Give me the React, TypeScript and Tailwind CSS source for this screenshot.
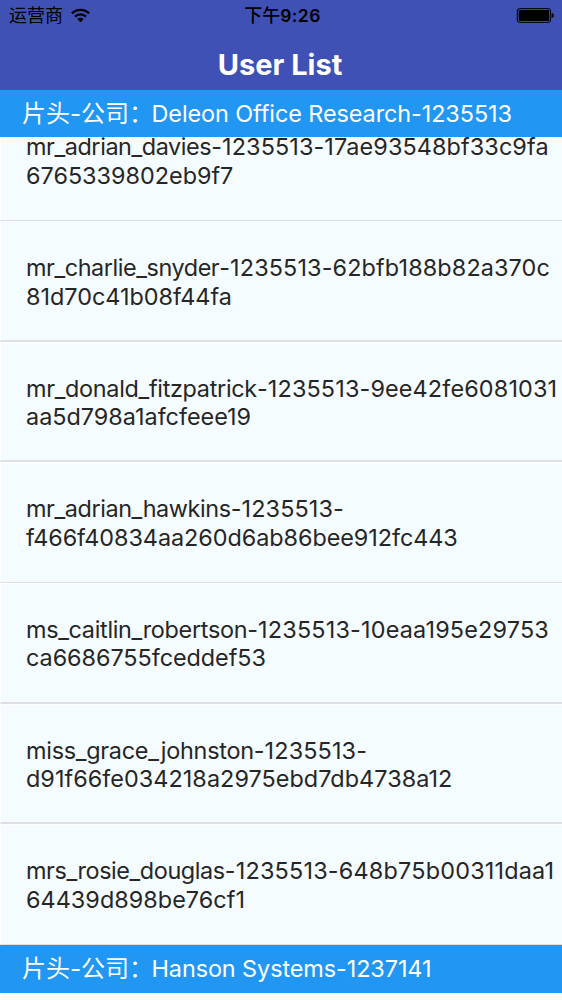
import React from "react";

interface Entry {
  name: string;
  id: string;
  rest: string;
  nameClass: string;
  idClass: string;
  restClass?: string;
  rule?: string;
}

const first: Entry = {
  name: "mr_adrian_davies", id: "-1235513-17ae93548bf33c9fa", rest: "6765339802eb9f7",
  nameClass: "tracking-[-0.41px]", idClass: "tracking-[0.11px]",
};

const users: Entry[] = [
  { name: "mr_charlie_snyder", id: "-1235513-62bfb188b82a370c", rest: "81d70c41b08f44fa", nameClass: "tracking-[-0.42px]", idClass: "tracking-[0.13px]", rule: "border-b-2" },
  { name: "mr_donald_fitzpatrick", id: "-1235513-9ee42fe6081031", rest: "aa5d798a1afcfeee19", nameClass: "tracking-[-0.3px]", idClass: "tracking-[0.15px]", rule: "border-b-2" },
  { name: "mr_adrian_hawkins", id: "-1235513-", rest: "f466f40834aa260d6ab86bee912fc443", nameClass: "tracking-[-0.4px]", idClass: "tracking-[0.13px]", restClass: "tracking-[-0.05px]", rule: "border-b" },
  { name: "ms_caitlin_robertson", id: "-1235513-10eaa195e29753", rest: "ca6686755fceddef53", nameClass: "tracking-[-0.31px]", idClass: "tracking-[0.19px]", restClass: "tracking-[-0.05px]", rule: "border-b-2" },
  { name: "miss_grace_johnston", id: "-1235513-", rest: "d91f66fe034218a2975ebd7db4738a12", nameClass: "tracking-[-0.26px]", idClass: "tracking-[0.13px]", restClass: "tracking-[0.05px]", rule: "border-b-2" },
  { name: "mrs_rosie_douglas", id: "-1235513-648b75b00311daa1", rest: "64439d898be76cf1", nameClass: "tracking-[-0.4px]", idClass: "tracking-[0.21px]", restClass: "tracking-[0.04px]", rule: "border-b" },
];

function SectionHeader({ name, height }: { name: string; height: string }) {
  return (
    <div className={`flex shrink-0 items-center whitespace-pre bg-[#2196f3] pl-[22px] text-[23.4px] text-white ${height}`}>
      <span className="w-[129.5px] text-[24px]">片头-公司：</span>
      <span className="tracking-[-0.07px]">{name}</span>
    </div>
  );
}

function Lines({ entry }: { entry: Entry }) {
  return (
    <div className="whitespace-nowrap text-[23.4px] leading-[28.5px] text-[#262626]">
      <div>
        <span className={entry.nameClass}>{entry.name}</span>
        <span className={entry.idClass}>{entry.id}</span>
      </div>
      <div className={entry.restClass}>{entry.rest}</div>
    </div>
  );
}

export default function App() {
  return (
    <div className="flex h-[1000px] w-[562px] flex-col overflow-hidden bg-[#f5fcff] font-['Inter','Noto_Sans_CJK_SC',sans-serif]">
      <header className="h-[90px] shrink-0 bg-[#3f51b5]">
        <div className="flex h-[31px] items-center justify-between pl-[9px] pr-[8px] text-[18px] text-black">
          <div className="flex w-[120px] items-center gap-[8px]">
            <span>运营商</span>
            <svg width="19" height="15" viewBox="0 0 20 15" fill="none" stroke="black" strokeWidth="2.5">
              <path d="M1 5.3a12.7 12.7 0 0 1 18 0M4.2 8.7a8.2 8.2 0 0 1 11.6 0" />
              <path d="M6.6 11.2a4.8 4.8 0 0 1 6.8 0L10 14.5z" fill="black" stroke="none" />
            </svg>
          </div>
          <div className="whitespace-nowrap pl-[2px] text-[17.5px]">
            <span className="text-[18px] font-medium">下午</span>
            <span className="font-semibold tracking-[0.4px]">9:26</span>
          </div>
          <div className="flex w-[120px] justify-end">
            <svg width="38" height="15" viewBox="0 0 38 15">
              <rect x="1.3" y="0.6" width="33.3" height="13.8" rx="2.3" fill="none" stroke="black" strokeWidth="1" />
              <rect x="2.7" y="2" width="30.5" height="11" rx="0.8" fill="black" />
              <path d="M35.6 5.2c2 .4 2.3 1.1 2.3 2.3s-.3 1.9-2.3 2.3z" fill="black" />
            </svg>
          </div>
        </div>
        <h1 className="pr-[2px] text-center text-[29px] font-bold leading-[67px] text-white">User List</h1>
      </header>
      <SectionHeader name="Deleon Office Research-1235513" height="h-[47px]" />
      <div className="flex h-[84px] shrink-0 flex-col justify-end overflow-hidden border-b border-l border-b-[#dadddf] border-l-white pb-[30px] pl-[25px]">
        <Lines entry={first} />
      </div>
      {users.map((u) => (
        <div key={u.name} className={`h-[120.67px] shrink-0 border-l border-t border-t-white border-b-[#dedfe1] border-l-white pl-[25px] pt-[32px] ${u.rule}`}>
          <Lines entry={u} />
        </div>
      ))}
      <SectionHeader name="Hanson Systems-1237141" height="h-[48px]" />
      <div className="flex-1 border-l border-t border-white" />
    </div>
  );
}
